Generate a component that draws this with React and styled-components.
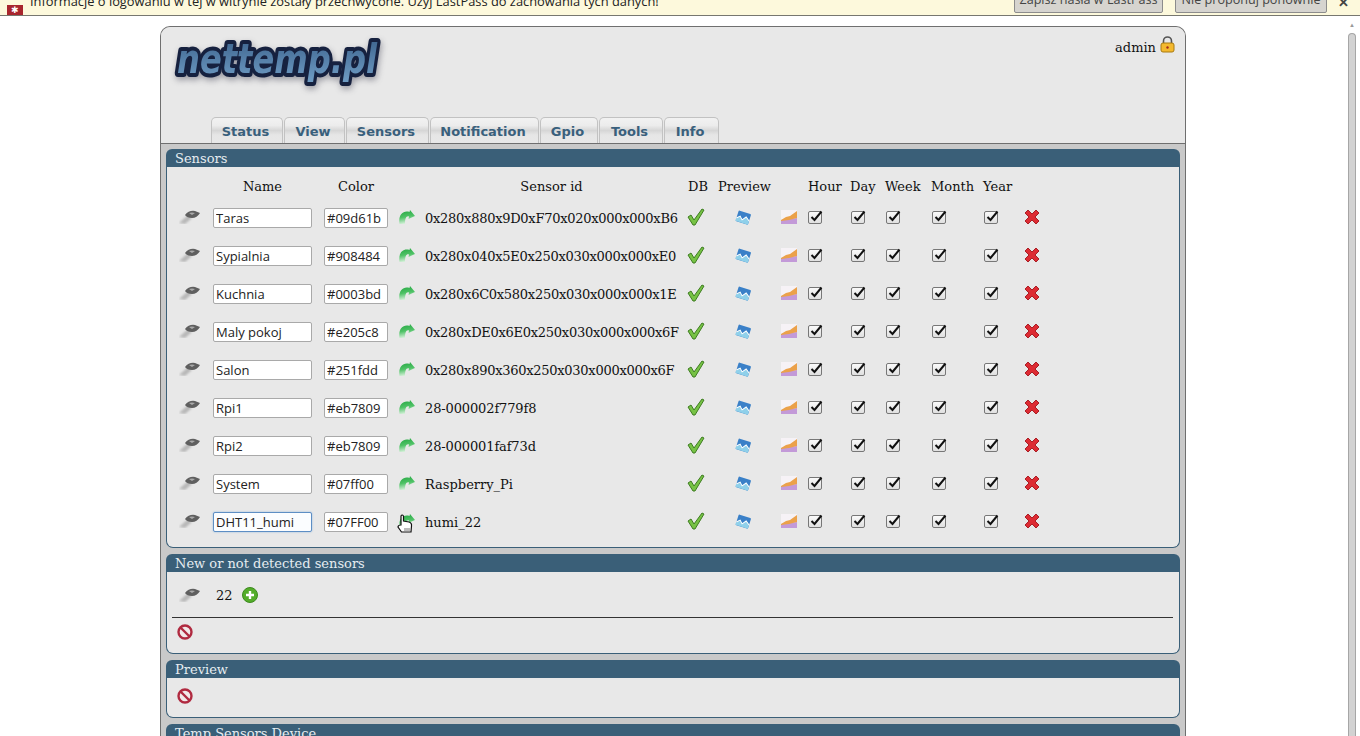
import React from "react";
import styled, { createGlobalStyle } from "styled-components";

const GlobalStyle = createGlobalStyle`
  html, body {
    margin: 0;
    height: 100%;
    overflow: hidden;
    background: #fff;
  }
`;

const Screen = styled.div`
  height: 736px;
  display: flex;
  flex-direction: column;
  overflow: hidden;
`;

const InfoBar = styled.div`
  flex: none;
  height: 16px;
  box-sizing: border-box;
  display: flex;
  align-items: flex-end;
  background: #fdf9dc;
  border-bottom: 1px solid #77776f;
  font-family: "Open Sans", sans-serif;
  font-size: 12.86px;
  color: #222;
  overflow: hidden;
`;

const InfoIcon = styled.span`
  width: 16px;
  height: 10px;
  margin: 0 7px 0 7px;
  background: #a8262e;
  flex: none;
  text-align: center;
  color: #fff;
  font-size: 9px;
  line-height: 9px;
`;

const InfoText = styled.span`
  flex: 1;
  white-space: nowrap;
  line-height: 18px;
  margin-bottom: 5px;
`;

const InfoButton = styled.span`
  height: 24px;
  margin: 0 0 2px 12px;
  width: ${(p) => p.$w}px;
  box-sizing: border-box;
  background: #d6d4cf;
  border: 1px solid #8c8c8c;
  border-radius: 2px;
  text-align: center;
  line-height: 19px;
  font-size: 12.6px;
  color: #444;
  white-space: nowrap;
  overflow: hidden;
`;

const InfoClose = styled.span`
  width: 33px;
  text-align: center;
  font-size: 13px;
  font-weight: 700;
  line-height: 14px;
  margin-bottom: 6px;
  color: #444;
`;

const PageRow = styled.div`
  flex: 1;
  display: flex;
  min-height: 0;
`;

const Main = styled.div`
  flex: 1;
  padding: 10px 0 0 2px;
  overflow: hidden;
`;

const ScrollBar = styled.div`
  width: 16px;
  flex: none;
  padding: 6px 4px 0 4px;
  box-sizing: border-box;
  display: flex;
  flex-direction: column;
  align-items: center;
  color: #999;
  font-size: 6px;
  background: #fff;
`;

const ScrollThumb = styled.div`
  margin-top: 5px;
  width: 8px;
  flex: 1;
  box-sizing: border-box;
  background: #d2d2d2;
  border: 1px solid #a6a6a6;
  border-bottom: 0;
  border-radius: 4px 4px 0 0;
`;

const Shell = styled.div`
  width: 1026px;
  margin: 0 auto;
  box-sizing: border-box;
  border: 1px solid #6f6f6f;
  border-bottom: 0;
  border-radius: 10px 10px 0 0;
  background: #c9c9c9;
  height: 800px;
  overflow: hidden;
  font-family: "DejaVu Serif", serif;
  font-size: 13px;
  color: #111;
`;

const Header = styled.div`
  height: 117px;
  box-sizing: border-box;
  background: #e8e8e8;
  border-bottom: 1px solid #6f6f6f;
  display: flex;
  flex-direction: column;
  justify-content: space-between;
`;

const TopRow = styled.div`
  display: flex;
  justify-content: space-between;
  padding: 6px 10px 0 9px;
`;

const Logo = styled.svg`
  display: block;
  filter: drop-shadow(1px 3px 3px rgba(40, 40, 60, 0.4));
`;

const UserBox = styled.div`
  display: flex;
  align-items: flex-start;
  gap: 4px;
  padding-top: 3px;
  line-height: 24px;
`;

const Tabs = styled.div`
  display: flex;
  gap: 1px;
  padding-left: 50px;
`;

const Tab = styled.div`
  width: ${(p) => p.$w}px;
  height: 26px;
  box-sizing: border-box;
  padding-right: 3px;
  border: 1px solid #c2c2c2;
  border-bottom: 0;
  border-radius: 5px 5px 0 0;
  background: linear-gradient(#f2f2f2 0, #ececec 30%, #d6d6d6 50%, #e6e6e6 68%, #e8e8e8 100%);
  text-align: center;
  font-family: "DejaVu Sans", sans-serif;
  font-weight: 700;
  font-size: 13px;
  line-height: 27px;
  color: #39607c;
`;

const Content = styled.div`
  padding: 5px 5px 0;
  display: flex;
  flex-direction: column;
  gap: 6px;
`;

const Panel = styled.section`
  display: flex;
  flex-direction: column;
`;

const PanelTitle = styled.div`
  height: 18px;
  background: #3a5f78;
  border-radius: 6px 6px 0 0;
  color: #e6edf1;
  padding-left: 9px;
  line-height: 20px;
`;

const PanelBody = styled.div`
  background: #e8e8e8;
  border: 1px solid #3a5f78;
  border-top: 0;
  border-radius: 0 0 7px 7px;
  height: ${(p) => p.$h}px;
  box-sizing: border-box;
`;

const columns =
  "46px 111px 75px 26px 263px 30px 62px 28px 42px 35px 46px 52px 40px 20px";

const HeadRow = styled.div`
  display: grid;
  grid-template-columns: ${columns};
  height: 32px;
  align-items: center;
  padding-top: 6px;
  box-sizing: border-box;
`;

const HeadCell = styled.span`
  text-align: ${(p) => p.$align || "left"};
  width: ${(p) => (p.$w ? `${p.$w}px` : "auto")};
`;

const Row = styled.div`
  display: grid;
  grid-template-columns: ${columns};
  height: 38px;
  align-items: center;
`;

const IconCell = styled.span`
  display: flex;
  align-items: center;
  box-sizing: border-box;
  height: 24px;
  padding-bottom: 2px;
  padding-left: ${(p) => p.$left || 0}px;
  position: relative;
`;

const TextInput = styled.input`
  display: block;
  width: ${(p) => p.$w}px;
  height: 20px;
  box-sizing: border-box;
  padding: 0 2px;
  border: 1px solid ${(p) => (p.$focus ? "#5d8ec4" : "#a9a9a9")};
  border-radius: 2px;
  background: ${(p) => (p.$focus ? "#fbfdff" : "#fff")};
  box-shadow: ${(p) => (p.$focus ? "0 0 2px #8fb6de" : "none")};
  font-family: "Open Sans", sans-serif;
  font-size: 13px;
  color: #222;
  outline: none;
`;

const SensorId = styled.span`
  white-space: nowrap;
  font-size: 13px;
  padding-top: 1px;
  letter-spacing: ${(p) => p.$spacing}px;
`;

const Cursor = styled.svg`
  position: absolute;
  left: -2px;
  top: 3px;
`;

const TickIcon = styled.svg`
  margin-left: -1px;
`;

const CheckFrame = styled.span`
  width: 14px;
  height: 13px;
  box-sizing: border-box;
  border: 1px solid #777;
  border-radius: 2px;
  background: linear-gradient(#fafafa, #e0e0e0);
  display: block;
  position: relative;
`;

const CheckMark = styled.svg`
  position: absolute;
  left: 0;
  top: -2px;
  overflow: visible;
`;

const NewRow = styled.div`
  height: 46px;
  box-sizing: border-box;
  display: flex;
  align-items: center;
  padding: 1px 0 0 7px;
  border-bottom: 1px solid #333;
  margin: 0 6px 0 5px;
`;

const NewCount = styled.span`
  margin: 0 9px 0 15px;
`;

const ActionRow = styled.div`
  padding: ${(p) => p.$top}px 0 0 10px;
`;

const Sensor = () => (
  <svg width="22" height="14" viewBox="0 0 22 14">
    <defs>
      <filter id="sensorBlur"><feGaussianBlur stdDeviation="0.9" /></filter>
    </defs>
    <path d="M0 13 L9 5 L13 8 L6 14 Z" fill="#a8a8a8" opacity=".75" filter="url(#sensorBlur)" />
    <path d="M6 5 Q10 0 16 1 L21 3 Q18 8 13 8 Q8 8 6 5Z" fill="#5f5f5f" />
    <path d="M10 3 Q13 2 16 3 L13 5Z" fill="#a9a9a9" />
  </svg>
);

const Arrow = () => (
  <svg width="16" height="14" viewBox="0 0 16 14">
    <defs>
      <linearGradient id="arrowFill" x1="0" y1="0" x2="0.2" y2="1">
        <stop offset="0" stopColor="#21a53f" />
        <stop offset=".55" stopColor="#4fc266" />
        <stop offset="1" stopColor="#d6f0da" />
      </linearGradient>
    </defs>
    <path d="M0.5 14 C-1 5 4 0 10.5 2 L11 0 L16 6 L9.5 9 L10 6.5 C7 5.5 6 9 6 14 Z" fill="url(#arrowFill)" />
  </svg>
);

const Tick = () => (
  <TickIcon width="18" height="18" viewBox="0 0 18 18">
    <path d="M1 9 L4 7 L7 12 L15 1 L17 2 L8 17 L6 17 Z" fill="#76c244" stroke="#3f7d22" strokeWidth="1" />
  </TickIcon>
);

const Preview = () => (
  <svg width="17" height="16" viewBox="0 0 17 16">
    <g transform="rotate(18 8 8)">
      <rect x="2" y="3" width="13" height="11" rx="1" fill="#3a80c8" />
      <path d="M2 11 L5 8 L8 11 L11 7 L15 10 L15 14 L2 14 Z" fill="#8fd0ea" />
      <path d="M2 11 L5 8 L8 11 L11 7 L15 10" stroke="#fff" fill="none" />
    </g>
  </svg>
);

const Chart = () => (
  <svg width="18" height="16" viewBox="0 0 18 16">
    <rect x="1" y="1" width="16" height="14" fill="#f6f2f6" />
    <path d="M1 15 L1 11 L17 9 L17 15 Z" fill="#c39ad8" />
    <path d="M1 11 L6 8 L10 7 L17 2 L17 9 L9 11 L1 12 Z" fill="#eba14a" />
  </svg>
);

const Cross = () => (
  <svg width="16" height="16" viewBox="0 0 16 16">
    <path
      d="M1 4 L4 1 L8 5 L12 1 L15 4 L11 8 L15 12 L12 15 L8 11 L4 15 L1 12 L5 8 Z"
      fill="#dd2b33"
      stroke="#a91f26"
      strokeWidth="1"
    />
  </svg>
);

const Plus = () => (
  <svg width="16" height="16" viewBox="0 0 16 16">
    <circle cx="8" cy="8" r="7.5" fill="#54ad2a" stroke="#3c8a1e" />
    <path d="M4 8 H12 M8 4 V12" stroke="#fff" strokeWidth="2.4" />
  </svg>
);

const NoEntry = () => (
  <svg width="16" height="16" viewBox="0 0 16 16">
    <circle cx="8" cy="8" r="6.5" fill="#f1e9e9" stroke="#b02a40" strokeWidth="2.4" />
    <path d="M3.5 3.5 L12.5 12.5" stroke="#b02a40" strokeWidth="2.4" />
  </svg>
);

const Lock = () => (
  <svg width="15" height="17" viewBox="0 0 15 17">
    <path d="M3.5 8 V5 a4 4 0 0 1 8 0 V8" fill="none" stroke="#555" strokeWidth="1.6" />
    <rect x="1" y="7" width="13" height="9" rx="2" fill="#f4b92f" stroke="#a97a10" />
    <circle cx="7.5" cy="11.5" r="1.2" fill="#a3291b" />
  </svg>
);

const Hand = () => (
  <Cursor width="16" height="20" viewBox="0 0 16 20">
    <path
      d="M4 12 L4 3 Q5 1 6.5 3 L6.5 8 L12 9 Q15 10 14.5 13 L14 19 L4.5 19 L1 14 Q1 12 4 12 Z"
      fill="#fff"
      stroke="#111"
      strokeWidth="1.2"
    />
    <path d="M8 15 V18 M10 15 V18 M12 15 V18" stroke="#777" />
  </Cursor>
);

const Check = () => (
  <CheckFrame>
    <CheckMark width="14" height="13" viewBox="0 0 14 13">
      <path d="M2.5 7 L5.5 10 L12.5 1.5" fill="none" stroke="#111" strokeWidth="2" />
    </CheckMark>
  </CheckFrame>
);

const sensors = [
  ["Taras", "#09d61b", "0x280x880x9D0xF70x020x000x000xB6", -0.27],
  ["Sypialnia", "#908484", "0x280x040x5E0x250x030x000x000xE0", -0.27],
  ["Kuchnia", "#0003bd", "0x280x6C0x580x250x030x000x000x1E", -0.27],
  ["Maly pokoj", "#e205c8", "0x280xDE0x6E0x250x030x000x000x6F", -0.27],
  ["Salon", "#251fdd", "0x280x890x360x250x030x000x000x6F", -0.27],
  ["Rpi1", "#eb7809", "28-000002f779f8", -0.13],
  ["Rpi2", "#eb7809", "28-000001faf73d", -0.13],
  ["System", "#07ff00", "Raspberry_Pi", 0],
  ["DHT11_humi", "#07FF00", "humi_22", 0],
];

const tabs = [
  ["Status", 72],
  ["View", 61],
  ["Sensors", 83],
  ["Notification", 109],
  ["Gpio", 58],
  ["Tools", 64],
  ["Info", 55],
];

const SensorRow = ({ name, color, id, spacing, active }) => (
  <Row>
    <IconCell $left={12}><Sensor /></IconCell>
    <span><TextInput $w={99} defaultValue={name} $focus={active} /></span>
    <span><TextInput $w={64} defaultValue={color} /></span>
    <IconCell>
      <Arrow />
      {active && <Hand />}
    </IconCell>
    <SensorId $spacing={spacing}>{id}</SensorId>
    <IconCell><Tick /></IconCell>
    <IconCell $left={17}><Preview /></IconCell>
    <IconCell><Chart /></IconCell>
    <IconCell><Check /></IconCell>
    <IconCell $left={1}><Check /></IconCell>
    <IconCell $left={1}><Check /></IconCell>
    <IconCell $left={1}><Check /></IconCell>
    <IconCell $left={1}><Check /></IconCell>
    <IconCell $left={1}><Cross /></IconCell>
  </Row>
);

export default function App() {
  return (
    <Screen>
      <GlobalStyle />
      <InfoBar>
        <InfoIcon>✱</InfoIcon>
        <InfoText>
          Informacje o logowaniu w tej w witrynie zostały przechwycone. Użyj LastPass do zachowania tych danych!
        </InfoText>
        <InfoButton $w={149}>Zapisz hasła w LastPass</InfoButton>
        <InfoButton $w={152}>Nie proponuj ponownie</InfoButton>
        <InfoClose>✕</InfoClose>
      </InfoBar>
      <PageRow>
        <Main>
          <Shell>
            <Header>
              <TopRow>
                <Logo width="216" height="56" viewBox="0 0 216 56">
                  <defs>
                    <linearGradient id="logoFill" x1="0" y1="0" x2="0" y2="1">
                      <stop offset="0" stopColor="#3b628c" />
                      <stop offset="1" stopColor="#6f9cc4" />
                    </linearGradient>
                  </defs>
                  <text
                    x="7"
                    y="40"
                    textLength="200"
                    lengthAdjust="spacingAndGlyphs"
                    fontFamily="DejaVu Sans"
                    fontWeight="700"
                    fontStyle="italic"
                    fontSize="40"
                    fill="url(#logoFill)"
                    stroke="#16213f"
                    strokeWidth="8"
                    strokeLinejoin="round"
                    paintOrder="stroke"
                  >
                    nettemp.pl
                  </text>
                </Logo>
                <UserBox>
                  admin
                  <Lock />
                </UserBox>
              </TopRow>
              <Tabs>
                {tabs.map(([label, w]) => (
                  <Tab key={label} $w={w}>{label}</Tab>
                ))}
              </Tabs>
            </Header>
            <Content>
              <Panel>
                <PanelTitle>Sensors</PanelTitle>
                <PanelBody $h={381}>
                  <HeadRow>
                    <span />
                    <HeadCell $align="center" $w={99}>Name</HeadCell>
                    <HeadCell $align="center" $w={64}>Color</HeadCell>
                    <span />
                    <HeadCell $align="center" $w={253}>Sensor id</HeadCell>
                    <HeadCell>DB</HeadCell>
                    <HeadCell>Preview</HeadCell>
                    <span />
                    <HeadCell>Hour</HeadCell>
                    <HeadCell>Day</HeadCell>
                    <HeadCell>Week</HeadCell>
                    <HeadCell>Month</HeadCell>
                    <HeadCell>Year</HeadCell>
                    <span />
                  </HeadRow>
                  {sensors.map(([name, color, id, spacing], i) => (
                    <SensorRow
                      key={id}
                      name={name}
                      color={color}
                      id={id}
                      spacing={spacing}
                      active={i === sensors.length - 1}
                    />
                  ))}
                </PanelBody>
              </Panel>
              <Panel>
                <PanelTitle>New or not detected sensors</PanelTitle>
                <PanelBody $h={82}>
                  <NewRow>
                    <Sensor />
                    <NewCount>22</NewCount>
                    <Plus />
                  </NewRow>
                  <ActionRow $top={6}><NoEntry /></ActionRow>
                </PanelBody>
              </Panel>
              <Panel>
                <PanelTitle>Preview</PanelTitle>
                <PanelBody $h={40}>
                  <ActionRow $top={10}><NoEntry /></ActionRow>
                </PanelBody>
              </Panel>
              <Panel>
                <PanelTitle>Temp Sensors Device</PanelTitle>
                <PanelBody $h={40} />
              </Panel>
            </Content>
          </Shell>
        </Main>
        <ScrollBar>
          ▲
          <ScrollThumb />
        </ScrollBar>
      </PageRow>
    </Screen>
  );
}
